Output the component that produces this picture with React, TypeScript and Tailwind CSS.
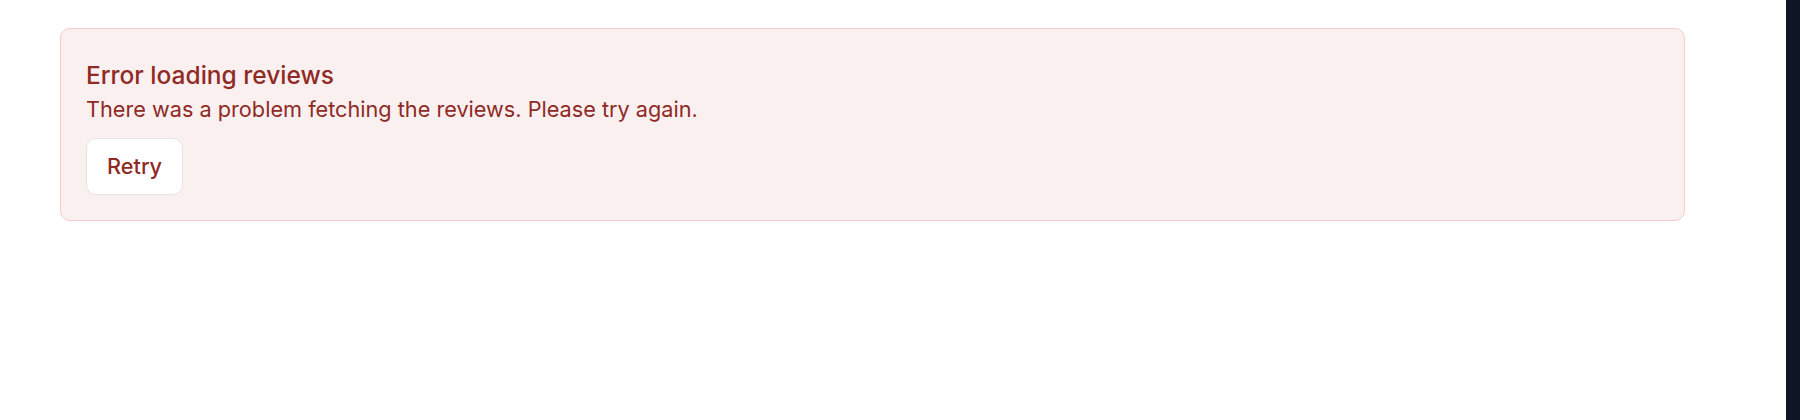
export default function App() {
  return (
    <div className="flex h-[420px] w-full bg-white" style={{ fontFamily: 'Inter, "Noto Sans", sans-serif' }}>
      <main className="flex-1 pl-[60px] pt-[28px]">
        {/* Error state */}
        <div className="w-[1625px] rounded-[10px] border border-[#f5caca] bg-[#fbf0f0] p-[25px] text-[#8f2a25]">
          <h2 className="mt-[7px] text-[24.5px] leading-[29px] font-medium">Error loading reviews</h2>
          <p className="mt-[6px] text-[21.7px] leading-[26px]">
            There was a problem fetching the reviews. Please try again.
          </p>
          <button className="mt-[16px] flex h-[57px] items-center rounded-[10px] border border-[#ebe3e3] bg-white px-[20px] text-[21.7px] font-medium text-[#8f2a25]">
            Retry
          </button>
        </div>
      </main>
      <div className="w-[14px] bg-[#0f1525]" />
    </div>
  )
}
